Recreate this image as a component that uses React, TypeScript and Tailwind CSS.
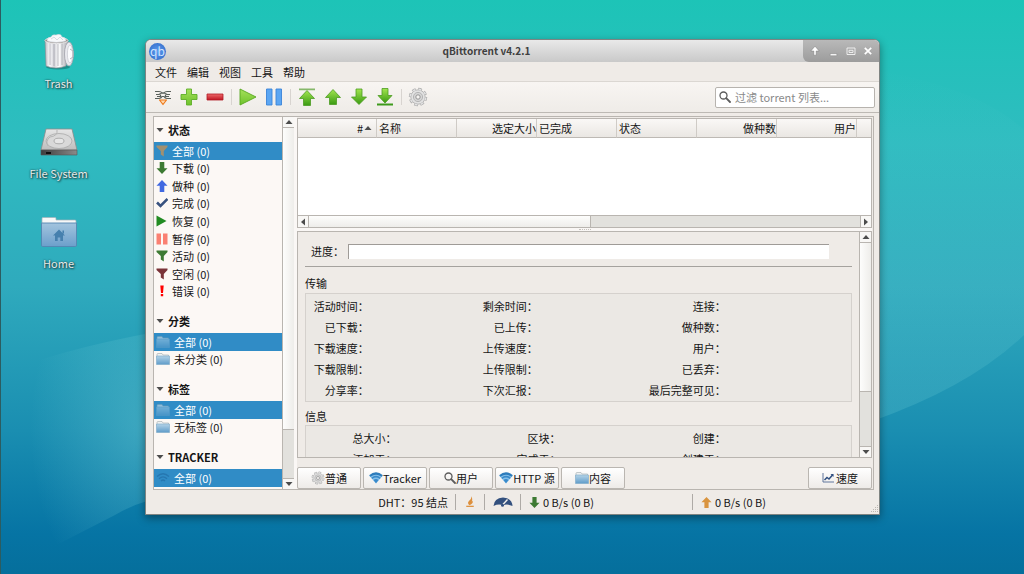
import React from "react";
import type { ReactNode } from "react";

/* ---------- icons ---------- */

type IconProps = { className?: string };

const Svg = ({ box, className, children }: { box: string; className?: string; children: ReactNode }) => (
  <svg viewBox={box} className={className} aria-hidden="true">{children}</svg>
);

const TrashIcon = () => (
  <Svg box="0 0 30 36" className="h-9 w-[30px]">
    <defs>
      <linearGradient id="can" x1="0" x2="1">
        <stop offset="0" stopColor="#b9b9bf" />
        <stop offset=".2" stopColor="#fafafc" />
        <stop offset=".4" stopColor="#d2d2d8" />
        <stop offset=".6" stopColor="#fff" />
        <stop offset="1" stopColor="#a9a9b0" />
      </linearGradient>
    </defs>
    <ellipse cx="14" cy="33" rx="12" ry="2.5" fill="#000" opacity=".25" />
    <path d="M1 6 L2 32 Q12 36 22 32 L24 6Z" fill="url(#can)" stroke="#8d8d94" strokeWidth=".6" />
    <path d="M6 9v22M10 10v22M14 10v22M18 9v22" stroke="#9a9aa3" strokeWidth="1" opacity=".65" />
    <ellipse cx="12.5" cy="6.5" rx="11.5" ry="3" fill="#8c8078" stroke="#e8e8ea" strokeWidth="1" />
    <path d="M3 7 Q3 3 7 3 Q8 0 12 1 Q17-1 18 3 Q22 3 22 7 Q12 10 3 7Z" fill="#f8f9fb" stroke="#c9ced6" strokeWidth=".6" />
    <path d="M7 5l3-2 3 3 3-3 3 3" fill="none" stroke="#c9ced6" strokeWidth=".7" />
    <ellipse cx="25" cy="20" rx="4.5" ry="12" fill="#e9e9ee" stroke="#9a9aa3" strokeWidth=".7" />
    <ellipse cx="26" cy="20" rx="2.6" ry="9" fill="#fbfbfd" stroke="#bdbdc6" strokeWidth=".6" />
    <path d="M26 15l3 2v6l-3 2" fill="none" stroke="#b4b4bc" strokeWidth="1" />
  </Svg>
);

const DriveIcon = () => (
  <Svg box="0 0 38 28" className="h-7 w-[38px]">
    <defs>
      <linearGradient id="drv" x1="0" y1="0" x2="0" y2="1">
        <stop offset="0" stopColor="#e6e6e6" />
        <stop offset="1" stopColor="#bdbdbd" />
      </linearGradient>
      <linearGradient id="drvf" x1="0" x2="1">
        <stop offset="0" stopColor="#3e3e3e" />
        <stop offset="1" stopColor="#8a8a8a" />
      </linearGradient>
    </defs>
    <path d="M6 1h26l5 21H1Z" fill="url(#drv)" stroke="#8b8b8b" strokeWidth=".8" />
    <path d="M1 22h36v5H1Z" fill="url(#drvf)" stroke="#555" strokeWidth=".6" />
    <path d="M6 24h5v2H6z" fill="#111" />
    <ellipse cx="19" cy="13" rx="13" ry="7.5" fill="#d9d9d9" stroke="#a9a9a9" strokeWidth=".8" />
    <ellipse cx="19" cy="13" rx="5" ry="2.8" fill="#e6e6e6" stroke="#a0a0a0" strokeWidth=".8" />
    <path d="M17 2 Q18 8 10 9 Q5 13 8 18" fill="none" stroke="#b5b5b5" strokeWidth="1" />
  </Svg>
);

const HomeFolderIcon = () => (
  <Svg box="0 0 36 30" className="h-[30px] w-9">
    <defs>
      <linearGradient id="hf" x1="0" y1="0" x2="0" y2="1">
        <stop offset="0" stopColor="#a3c4de" />
        <stop offset="1" stopColor="#6c9fcb" />
      </linearGradient>
    </defs>
    <path d="M1 1.5 Q1 .5 2 .5h12q1 0 1 1V3h19q1 0 1 1v6H1Z" fill="#f7f8f8" stroke="#a3b3ba" strokeWidth=".7" />
    <path d="M.5 6h35v22q0 1.500-1 1.500h-33q-1 0-1-1.500Z" fill="url(#hf)" stroke="#5386b1" strokeWidth=".9" />
    <path d="M18 12.500l6 6h-2V24h-2.700v-3.500h-2.600V24H14v-5.500h-2Z M21.500 13.500h1.500v3h-1.500z" fill="#4680ae" />
  </Svg>
);

const Funnel = ({ className }: IconProps) => (
  <Svg box="0 0 12 12" className={className}>
    <path d="M.5 .5h11v1.500L7.800 6v5.500L4.800 9.500V6L.5 2Z" fill="currentColor" />
  </Svg>
);

const SolidArrow = ({ className }: IconProps) => (
  <Svg box="0 0 12 12" className={className}>
    <path d="M6 0l5.500 5.800H8.300V12H3.700V5.800H.5Z" fill="currentColor" />
  </Svg>
);

const Tick = ({ className }: IconProps) => (
  <Svg box="0 0 12 12" className={className}>
    <path d="M1 5.500L4.500 9 11.500 2" fill="none" stroke="currentColor" strokeWidth="2.600" />
  </Svg>
);

const PlayMark = ({ className }: IconProps) => (
  <Svg box="0 0 12 12" className={className}>
    <path d="M.5 .5L10.500 6 .5 11.500Z" fill="currentColor" />
  </Svg>
);

const PauseMark = ({ className }: IconProps) => (
  <Svg box="0 0 12 12" className={className}>
    <path d="M.5 .5h4.500v11H.5zM7 .5h4.500v11H7z" fill="currentColor" />
  </Svg>
);

const Bang = ({ className }: IconProps) => (
  <Svg box="0 0 12 12" className={className}>
    <path d="M4.300 .5h3.400L7 8H5z M4.800 9h2.400v2.300H4.800z" fill="currentColor" />
  </Svg>
);

const Folder = ({ className }: IconProps) => (
  <Svg box="0 0 14 12" className={className}>
    <defs>
      <linearGradient id="fo" x1="0" y1="0" x2="0" y2="1">
        <stop offset="0" stopColor="#b4d3e8" />
        <stop offset="1" stopColor="#5f9cc9" />
      </linearGradient>
    </defs>
    <path d="M1 1.500Q1 .5 2 .5h4l1 1.500h5.500v3H1Z" fill="#eef1f2" stroke="#9fa9ad" strokeWidth=".6" />
    <path d="M.5 3h13v8.500H.5Z" fill="url(#fo)" stroke="#7ba7c8" strokeWidth=".6" />
  </Svg>
);

const Wifi = ({ className }: IconProps) => (
  <Svg box="0 0 14 12" className={className}>
    <path d="M.5 4Q7-1.500 13.500 4L7 11.500Z" fill="#86c0ea" />
    <path d="M.8 4Q7-1 13.200 4" fill="none" stroke="#2d7cbc" strokeWidth="2.200" />
    <path d="M2.800 6.300Q7 3 11.200 6.300" fill="none" stroke="#3a8aca" strokeWidth="1.700" />
    <path d="M4.500 8Q7 6 9.500 8L7 11.200Z" fill="#3a8aca" />
  </Svg>
);

const FaintWifi = ({ className }: IconProps) => (
  <Svg box="0 0 14 12" className={className}>
    <g fill="none" stroke="#2677b0" strokeWidth="1.300">
      <path d="M1 4.500Q7-1 13 4.500" />
      <path d="M3 6.800Q7 3 11 6.800" />
      <path d="M5 9Q7 7 9 9" />
    </g>
  </Svg>
);

const Magnifier = ({ className }: IconProps) => (
  <Svg box="0 0 12 12" className={className}>
    <circle cx="4.500" cy="4.500" r="3.500" fill="none" stroke="#5c5c5c" strokeWidth="1.300" />
    <path d="M7.200 7.200L11 11" stroke="#5c5c5c" strokeWidth="1.800" strokeLinecap="round" />
  </Svg>
);

const Gear = ({ className }: IconProps) => (
  <Svg box="0 0 20 20" className={className}>
    <circle cx="10" cy="10" r="7.800" fill="none" stroke="#a8a8a8" strokeWidth="2.800" strokeDasharray="3.600 2.526" />
    <circle cx="10" cy="10" r="7.200" fill="#e2e2e2" stroke="#ababab" strokeWidth=".8" />
    <circle cx="10" cy="10" r="7.800" fill="none" stroke="#e2e2e2" strokeWidth="1.600" strokeDasharray="2.600 3.526" strokeDashoffset="-.5" />
    <circle cx="10" cy="10" r="4.600" fill="#d6d6d6" stroke="#b0b0b0" strokeWidth=".9" />
    <circle cx="10" cy="10" r="2.200" fill="#f5f3f1" stroke="#949494" strokeWidth="1" />
  </Svg>
);

const LinkIcon = () => (
  <Svg box="0 0 18 18" className="size-[18px]">
    <g fill="none" stroke="#5a615c" strokeWidth="1.200">
      <path d="M1 3.500h4q2 0 3 1.500h2q1-1.500 3-1.500h4" />
      <path d="M2 6.500h3q1.500-1.500 4-1.500t4 1.500h3" />
      <path d="M1 10.500h4q2 0 3-2h2q1 2 3 2h4" />
      <path d="M3 8.500h3M12 8.500h3M6.500 6.500v3M11.500 6.500v3" />
    </g>
    <path d="M5.500 12h7L9 16.500Z" fill="#ffd9ae" stroke="#ee7a1c" strokeWidth="1.200" strokeLinejoin="round" />
  </Svg>
);

const ToolDefs = () => (
  <defs>
    <linearGradient id="grn" x1="0" y1="0" x2="0" y2="1">
      <stop offset="0" stopColor="#a2e64f" />
      <stop offset="1" stopColor="#3a9a12" />
    </linearGradient>
    <linearGradient id="lime" x1="0" y1="0" x2="0" y2="1">
      <stop offset="0" stopColor="#a5e05a" />
      <stop offset="1" stopColor="#6ec22c" />
    </linearGradient>
    <linearGradient id="red" x1="0" y1="0" x2="0" y2="1">
      <stop offset="0" stopColor="#ee6a6a" />
      <stop offset="1" stopColor="#bf1522" />
    </linearGradient>
  </defs>
);

const PlusIcon = () => (
  <Svg box="0 0 18 18" className="size-[18px]">
    <ToolDefs />
    <path d="M6.500 1h5v5.500H17v5h-5.500V17h-5v-5.500H1v-5h5.500Z" fill="url(#lime)" stroke="#5fae28" strokeWidth=".9" />
  </Svg>
);
const MinusIcon = () => (
  <Svg box="0 0 18 18" className="size-[18px]">
    <path d="M1 6h16v6H1Z" fill="url(#red)" stroke="#b01a24" strokeWidth=".8" />
  </Svg>
);
const StartIcon = () => (
  <Svg box="0 0 18 18" className="size-[18px]">
    <path d="M1 1L17 9 1 17Z" fill="url(#lime)" stroke="#58a820" strokeWidth=".9" />
  </Svg>
);
const PauseIcon = () => (
  <Svg box="0 0 18 18" className="size-[18px]">
    <path d="M1.500 1h5.500v16H1.500zM11 1h5.500v16H11z" fill="#5ba6f3" stroke="#3b83d8" strokeWidth=".9" />
  </Svg>
);
const QueueIcon = ({ down, bar }: { down?: boolean; bar?: boolean }) => (
  <Svg box="0 0 18 18" className="size-[18px]">
    {down ? (
      <path d={bar ? "M6 .5h6v7h4L9 15 2 7.500h4Z" : "M6 1h6v8h4.500L9 16.500 1.500 9H6Z"} fill="url(#grn)" stroke="#4b9c22" strokeWidth=".8" />
    ) : (
      <path d={bar ? "M9 2.500L16.500 10.500H12.500V17.500H5.500V10.500H1.500Z" : "M9 1.500L16.500 9.500H12.500V16.500H5.500V9.500H1.500Z"} fill="url(#grn)" stroke="#4b9c22" strokeWidth=".8" />
    )}
    {bar && <path d={down ? "M1 15.500h16v2H1z" : "M1 .5h16v1.700H1z"} fill={down ? "#3d9a1c" : "#86b86a"} />}
  </Svg>
);

const Flame = () => (
  <Svg box="0 0 12 14" className="h-3 w-[10px]">
    <path d="M7.500 0Q8 3 5 5.500 2 8.500 5.500 10.800 10 9.500 9.500 5 9.200 6.500 8.200 6.800 9.500 3 7.500 0Z" fill="#dd8f3c" />
    <path d="M1.500 12.200h9" stroke="#dd8f3c" strokeWidth="1.500" />
  </Svg>
);
const Gauge = () => (
  <Svg box="0 0 20 12" className="h-3 w-5">
    <path d="M.5 10Q1 2 10 1.500 19 2 19.500 10Q14 7.500 10 9.500 6 7.500 .5 10Z" fill="#33507e" />
    <path d="M9 9.500L14.500 3.500" stroke="#f1efec" strokeWidth="1.400" />
    <circle cx="9.500" cy="9.200" r="1.500" fill="#33507e" />
  </Svg>
);
const ChartMark = () => (
  <Svg box="0 0 12 10" className="h-[10px] w-3">
    <path d="M1 0v9h11" fill="none" stroke="#60779c" strokeWidth="1" />
    <path d="M2.500 7L5 4.500 7 6l4-4.500" fill="none" stroke="#2f4f80" strokeWidth="1.500" />
    <path d="M8.500 1h3v3Z" fill="#2f4f80" />
  </Svg>
);

/* ---------- shared pieces ---------- */

const turns = { up: "rotate-0", down: "rotate-180", left: "-rotate-90", right: "rotate-90" };

const Caret = ({ dir }: { dir: keyof typeof turns }) => (
  <svg viewBox="0 0 8 8" className={`size-2 shrink-0 ${turns[dir]}`} aria-hidden="true">
    <path d="M4 2L7.500 6H.5Z" fill="#4c4c4c" />
  </svg>
);

const ScrollBar = ({ vertical, filled, rest }: { vertical?: boolean; filled: number; rest: number }) => (
  <div className={vertical ? "flex w-3 shrink-0 flex-col border-l border-[#b9b5b0] bg-[#e2e1dd]" : "flex h-3 shrink-0 border-t border-[#b9b5b0] bg-[#e2e1dd]"}>
    <button aria-label={vertical ? "上" : "左"} className={vertical ? "flex h-[11px] items-center justify-center border-b border-[#b9b5b0] bg-[#f8f7f5]" : "flex w-[11px] items-center justify-center border-r border-[#b9b5b0] bg-[#f8f7f5]"}>
      <Caret dir={vertical ? "up" : "left"} />
    </button>
    <div className={vertical ? "border-b border-[#b9b5b0] bg-linear-to-r from-[#fdfdfc] to-[#eeedea]" : "border-r border-[#b9b5b0] bg-linear-to-b from-[#fdfdfc] to-[#eeedea]"} style={{ flexGrow: filled }} />
    <div style={{ flexGrow: rest }} />
    <button aria-label={vertical ? "下" : "右"} className={vertical ? "flex h-[11px] items-center justify-center border-t border-[#b9b5b0] bg-[#f8f7f5]" : "flex w-[11px] items-center justify-center border-l border-[#b9b5b0] bg-[#f8f7f5]"}>
      <Caret dir={vertical ? "down" : "right"} />
    </button>
  </div>
);

const Wallpaper = () => (
  <svg viewBox="0 0 1024 574" preserveAspectRatio="none" className="absolute inset-0 -z-10 size-full" aria-hidden="true">
    <defs>
      <linearGradient id="sky" x1="0" y1="0" x2="0" y2="1">
        <stop offset="0" stopColor="#1dc4b7" />
        <stop offset=".25" stopColor="#2fbcc0" />
        <stop offset=".5" stopColor="#2faabd" />
        <stop offset=".75" stopColor="#1a8eb1" />
        <stop offset=".93" stopColor="#0674a4" />
        <stop offset="1" stopColor="#056f9c" />
      </linearGradient>
      <linearGradient id="sweep" x1="0" y1="0" x2="0" y2="1">
        <stop offset="0" stopColor="#6fd0d6" stopOpacity="0" />
        <stop offset="1" stopColor="#6fd0d6" stopOpacity=".24" />
      </linearGradient>
      <radialGradient id="glow" cx=".95" cy=".4" r=".75">
        <stop offset="0" stopColor="#7fd6dc" stopOpacity=".34" />
        <stop offset="1" stopColor="#7fd6dc" stopOpacity="0" />
      </radialGradient>
    </defs>
    <path d="M0 0H1024V574H0Z" fill="url(#sky)" />
    <path d="M780 60Q960 70 1024 130V335Q970 387 870 422L780 440Z" fill="url(#sweep)" />
    <path d="M0 374Q60 350 150 333V500Q130 506 115 515L0 574Z" fill="url(#glow)" />
    <path d="M0 0H1V574H0Z" fill="#2c5c60" />
  </svg>
);

/* ---------- desktop ---------- */

const places = [
  { name: "Trash", icon: <TrashIcon /> },
  { name: "File System", icon: <DriveIcon /> },
  { name: "Home", icon: <HomeFolderIcon /> },
];

const Desktop = () => (
  <nav className="flex w-[145px] shrink-0 flex-col pt-[29px] pr-7">
    {places.map((p) => (
      <button key={p.name} className="flex h-[90px] flex-col items-center leading-4 text-[#e4eceb] [text-shadow:1px_1px_2px_#1d3b3e,0_0_2px_#1d3b3e]">
        <span className="flex h-[46px] items-center">{p.icon}</span>
        {p.name}
      </button>
    ))}
  </nav>
);

/* ---------- window parts ---------- */

const TitleBar = () => (
  <header className="flex h-[22px] shrink-0 items-stretch bg-linear-to-b from-[#e9e9e9] to-[#c9c9c9]">
    <div className="flex w-[76px] items-center pl-[3px]">
      <span className="flex size-[17px] items-center justify-center rounded-full bg-radial from-[#5c9df0] to-[#2f66c4] text-xs leading-3 text-[#cfe3ff]">qb</span>
    </div>
    <h1 className="flex-1 pr-[52px] text-center text-[10px] leading-[22px] font-bold text-[#3f3f3f]">qBittorrent v4.2.1</h1>
    <div className="flex w-[76px] items-center justify-around rounded-bl-md bg-linear-to-b from-[#b9b9b9] to-[#9c9c9c] px-[3px]">
      <button aria-label="卷起"><Svg box="0 0 10 10" className="size-3"><path d="M5 1L8.500 5H6v3.500H4V5H1.500Z" fill="#fff" stroke="#777" strokeWidth=".4" /></Svg></button>
      <button aria-label="最小化"><Svg box="0 0 10 10" className="size-[11px]"><path d="M2 7h6v1.800H2z" fill="#fff" stroke="#777" strokeWidth=".4" /></Svg></button>
      <button aria-label="最大化"><Svg box="0 0 10 10" className="size-[10px]"><path d="M1 2h8v6.500H1zM3 4.300h4v2.200H3z" fill="none" stroke="#f4f4f4" strokeWidth=".9" /></Svg></button>
      <button aria-label="关闭"><Svg box="0 0 10 10" className="size-[10px]"><path d="M1.800 1.800l6.400 6.400M8.200 1.800L1.800 8.200" stroke="#fff" strokeWidth="1.700" /></Svg></button>
    </div>
  </header>
);

const menus = ["文件", "编辑", "视图", "工具", "帮助"];

const MenuBar = () => (
  <nav className="flex h-5 shrink-0 items-center gap-[10px] border-b border-[#dbd7d2] pl-[9px]">
    {menus.map((m) => <button key={m}>{m}</button>)}
  </nav>
);

const tools: ({ name: string; icon: ReactNode } | null)[] = [
  { name: "添加链接", icon: <LinkIcon /> },
  { name: "添加", icon: <PlusIcon /> },
  { name: "删除", icon: <MinusIcon /> },
  null,
  { name: "继续", icon: <StartIcon /> },
  { name: "暂停", icon: <PauseIcon /> },
  null,
  { name: "移至顶部", icon: <QueueIcon bar /> },
  { name: "上移", icon: <QueueIcon /> },
  { name: "下移", icon: <QueueIcon down /> },
  { name: "移至底部", icon: <QueueIcon down bar /> },
  null,
  { name: "选项", icon: <Gear className="size-5" /> },
];

const ToolBar = () => (
  <div className="flex h-[31px] shrink-0 items-center border-b border-[#bdb9b4] bg-linear-to-b from-[#f8f5f2] to-[#efece8] pr-1 pl-1">
    {tools.map((t, i) =>
      t ? (
        <button key={t.name} aria-label={t.name} className="flex w-[26px] justify-center">{t.icon}</button>
      ) : (
        <span key={i} className="mx-[3px] h-4 w-px bg-[#d8d4d0]" />
      )
    )}
    <label className="ml-auto flex h-[21px] w-40 items-center gap-1 rounded-xs border border-[#b7b3ae] bg-white pl-[3px]">
      <Magnifier className="size-3 shrink-0" />
      <input aria-label="过滤 torrent 列表" placeholder="过滤 torrent 列表..." className="w-full min-w-0 bg-transparent outline-none placeholder:text-[#8a8a8a]" />
    </label>
  </div>
);

const small = "size-3 shrink-0";

const FilterRow = ({ icon, text, active }: { icon: ReactNode; text: string; active?: boolean }) => (
  <button className={active ? "flex min-h-0 flex-1 items-center gap-1 bg-[#308cc6] pl-0.5 text-white" : "flex min-h-0 flex-1 items-center gap-1 pl-0.5"}>
    {icon}
    {text}
  </button>
);

const FilterGroup = ({ title, height, children }: { title: string; height: string; children: ReactNode }) => (
  <section className="flex shrink-0 flex-col">
    <button className="flex h-[25px] items-center gap-1 pl-0.5 font-bold">
      <Caret dir="down" />
      <span className="pt-px">{title}</span>
    </button>
    <div className={`flex flex-col ${height}`}>{children}</div>
  </section>
);

const Sidebar = () => (
  <aside className="flex w-[141px] shrink-0 border-l border-[#b9b5b0] bg-[#fcf8f5]">
    <div className="flex min-w-0 flex-1 flex-col gap-2 overflow-hidden">
      <FilterGroup title="状态" height="h-[158px]">
        <FilterRow active icon={<Funnel className={`${small} text-[#a19070]`} />} text="全部 (0)" />
        <FilterRow icon={<SolidArrow className={`${small} rotate-180 text-[#3d7a33]`} />} text="下载 (0)" />
        <FilterRow icon={<SolidArrow className={`${small} text-[#4169e1]`} />} text="做种 (0)" />
        <FilterRow icon={<Tick className={`${small} text-[#38527f]`} />} text="完成 (0)" />
        <FilterRow icon={<PlayMark className={`${small} text-[#228b22]`} />} text="恢复 (0)" />
        <FilterRow icon={<PauseMark className={`${small} text-[#fa8072]`} />} text="暂停 (0)" />
        <FilterRow icon={<Funnel className={`${small} text-[#3d7a33]`} />} text="活动 (0)" />
        <FilterRow icon={<Funnel className={`${small} text-[#7a3338]`} />} text="空闲 (0)" />
        <FilterRow icon={<Bang className={`${small} text-[#ff0000]`} />} text="错误 (0)" />
      </FilterGroup>
      <FilterGroup title="分类" height="h-[35px]">
        <FilterRow active icon={<Folder className="h-3 w-[14px] opacity-50" />} text="全部 (0)" />
        <FilterRow icon={<Folder className="h-3 w-[14px]" />} text="未分类 (0)" />
      </FilterGroup>
      <FilterGroup title="标签" height="h-[35px]">
        <FilterRow active icon={<Folder className="h-3 w-[14px] opacity-50" />} text="全部 (0)" />
        <FilterRow icon={<Folder className="h-3 w-[14px]" />} text="无标签 (0)" />
      </FilterGroup>
      <FilterGroup title="TRACKER" height="h-[18px]">
        <FilterRow active icon={<FaintWifi className="h-3 w-[14px]" />} text="全部 (0)" />
      </FilterGroup>
    </div>
    <ScrollBar vertical filled={302} rest={48} />
  </aside>
);

const columns = [
  { name: "#", width: "w-[79px]", right: true, sorted: true },
  { name: "名称", width: "w-20" },
  { name: "选定大小", width: "w-20", right: true },
  { name: "已完成", width: "w-20" },
  { name: "状态", width: "w-20" },
  { name: "做种数", width: "w-20", right: true },
  { name: "用户", width: "w-20", right: true },
];

const TorrentList = () => (
  <div className="flex h-[110px] shrink-0 flex-col border border-[#b9b5b0] bg-white">
    <div className="min-h-0 flex-1 overflow-hidden">
      <table className="w-full table-fixed border-separate border-spacing-0">
        <thead>
          <tr className="h-[19px] bg-linear-to-b from-[#faf8f6] to-[#e9e6e2]">
            {columns.map((c) => (
              <th key={c.name} className={`border-r border-b border-r-[#cfcbc6] border-b-[#bdb9b4] p-0 font-normal whitespace-nowrap ${c.width} ${c.right ? "text-right" : "pl-0.5 text-left"}`}>
                {c.sorted ? <span className="flex items-center justify-end gap-px pr-1">#<Caret dir="up" /></span> : c.name}
              </th>
            ))}
            <th aria-label="其他" className="border-b border-[#bdb9b4] p-0" />
          </tr>
        </thead>
      </table>
    </div>
    <ScrollBar filled={283} rest={270} />
  </div>
);

const transfer = [
  ["活动时间：", "剩余时间：", "连接："],
  ["已下载：", "已上传：", "做种数："],
  ["下载速度：", "上传速度：", "用户："],
  ["下载限制：", "上传限制：", "已丢弃："],
  ["分享率：", "下次汇报：", "最后完整可见："],
];
const info = [
  ["总大小：", "区块：", "创建："],
  ["添加于：", "完成于：", "创建于："],
];

const Fields = ({ rows, cols }: { rows: string[][]; cols: string }) => (
  <div className={`grid auto-rows-[21px] items-center border border-[#d5d1cd] bg-[#ebe8e4] py-px text-right whitespace-nowrap ${cols}`}>
    {rows.map((r) => (
      <React.Fragment key={r[0]}>
        {r.map((label) => <span key={label}>{label}</span>)}
        <span />
      </React.Fragment>
    ))}
  </div>
);

const Details = () => (
  <div className="flex min-h-0 flex-1 border border-[#b9b5b0] bg-[#efebe7]">
    <div className="min-w-0 flex-1 overflow-hidden pr-[7px] pl-[7px]">
      <div className="flex h-[35px] items-center gap-0.5 border-b border-[#a5a29e] pt-1 pr-[23px] pl-[6px]">
        <span id="progress-label" className="w-[35px] shrink-0 whitespace-nowrap">进度：</span>
        <div role="progressbar" aria-labelledby="progress-label" aria-valuenow={0} className="h-[15px] flex-1 border-t border-l border-[#9f9b97] bg-white" />
      </div>
      <h2 className="flex h-[26px] items-end pb-0.5 leading-4">传输</h2>
      <Fields rows={transfer} cols="grid-cols-[63fr_170fr_189fr_126fr]" />
      <h2 className="flex h-[23px] items-center pt-1 leading-4">信息</h2>
      <Fields rows={info} cols="grid-cols-[91fr_165fr_166fr_126fr]" />
    </div>
    <ScrollBar vertical filled={149} rest={55} />
  </div>
);

const tabs = [
  { name: "普通", icon: <Gear className="size-[14px]" /> },
  { name: "Tracker", icon: <Wifi className="h-3 w-[14px]" /> },
  { name: "用户", icon: <Magnifier className="size-3" /> },
  { name: "HTTP 源", icon: <Wifi className="h-3 w-[14px]" /> },
  { name: "内容", icon: <Folder className="h-3 w-[14px]" /> },
];

const tabStyle = "flex h-[22px] w-16 items-center justify-center rounded-xs border border-[#bab6b1] bg-linear-to-b from-white to-[#eeebe8] whitespace-nowrap";

const TabButtons = () => (
  <div className="flex shrink-0 gap-0.5 pt-[9px]">
    {tabs.map((t) => (
      <button key={t.name} className={tabStyle}>{t.icon}{t.name}</button>
    ))}
    <button className={`${tabStyle} ml-auto gap-0.5`}><ChartMark />速度</button>
  </div>
);

const cell = "my-1 flex items-center border-l border-[#aeaaa6]";

const StatusBar = () => (
  <footer className="flex h-6 shrink-0 items-stretch">
    <div className="flex min-w-0 flex-1 items-center justify-end pr-[7px]">DHT：95 结点</div>
    <button aria-label="连接状态" className={`${cell} w-[29px] justify-center`}><Flame /></button>
    <button aria-label="备用速度限制" className={`${cell} w-9 justify-center`}><Gauge /></button>
    <button className={`${cell} w-[172px] gap-[3px] pl-2`}><SolidArrow className="size-[11px] rotate-180 text-[#3d7a33]" />0 B/s (0 B)</button>
    <button className={`${cell} w-[179px] gap-[3px] pl-2`}><SolidArrow className="size-[11px] text-[#d9943f]" />0 B/s (0 B)</button>
    <div className="flex w-2 items-end justify-end pb-0.5">
      <Svg box="0 0 8 8" className="size-2"><path d="M6 1h1v1H6zM4 3h1v1H4zM6 3h1v1H6zM2 5h1v1H2zM4 5h1v1H4zM6 5h1v1H6zM0 7h1v1H0zM2 7h1v1H2zM4 7h1v1H4zM6 7h1v1H6z" fill="#bbb7b2" /></Svg>
    </div>
  </footer>
);

export default function App() {
  return (
    <main className="relative isolate flex h-screen overflow-hidden font-['Noto_Sans_CJK_SC',sans-serif] text-[11px] leading-4 text-[#151515]">
      <Wallpaper />
      <Desktop />
      <div className="mt-[39px] mr-36 mb-[59px] flex min-w-0 flex-1 flex-col overflow-hidden rounded-t-md border border-[#7f8482] bg-[#efebe7] shadow-[0_3px_8px_rgba(0,0,0,0.4)]">
        <TitleBar />
        <MenuBar />
        <ToolBar />
        <div className="mt-[3px] mr-[5px] ml-[7px] flex min-h-0 flex-1 border-y border-r border-[#b9b5b0]">
          <Sidebar />
          <div className="w-[3px] shrink-0 bg-[#faf7f5]" />
          <div className="flex min-w-0 flex-1 flex-col pt-px pr-px">
            <TorrentList />
            <div className="flex h-[3px] shrink-0 items-center justify-center bg-[#faf7f5]">
              <span className="h-px w-3 border-t border-dotted border-[#c5c1bc]" />
            </div>
            <Details />
            <TabButtons />
          </div>
        </div>
        <StatusBar />
      </div>
    </main>
  );
}
